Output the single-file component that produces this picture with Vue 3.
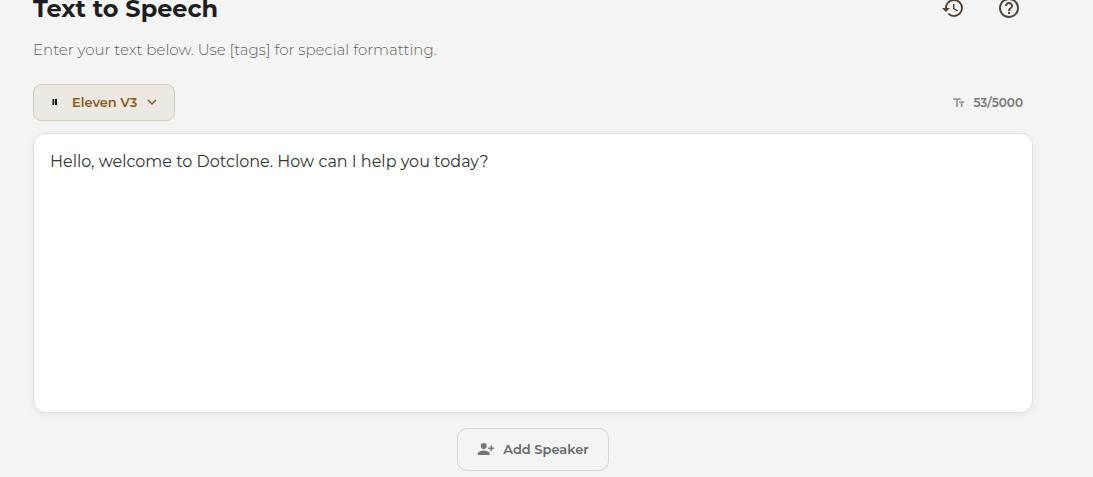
<script setup>
import { computed, ref } from 'vue'

const limit = 5000
const text = ref('Hello, welcome to Dotclone. How can I help you today?')
const count = computed(() => text.value.length)
</script>

<template>
  <main class="page">
    <header class="header">
      <h1 class="title">Text to Speech</h1>
      <div class="actions">
        <button class="icon-button" type="button" aria-label="History">
          <svg class="icon" viewBox="0 0 24 24" aria-hidden="true">
            <path d="M13 3a9 9 0 0 0-9 9H1l3.89 3.89.07.14L9 12H6c0-3.87 3.13-7 7-7s7 3.13 7 7-3.13 7-7 7c-1.93 0-3.68-.79-4.94-2.06l-1.42 1.42A8.954 8.954 0 0 0 13 21a9 9 0 0 0 0-18zm-1 5v5l4.28 2.54.72-1.21-3.5-2.08V8H12z" />
          </svg>
        </button>
        <button class="icon-button" type="button" aria-label="Help">
          <svg class="icon" viewBox="0 0 24 24" aria-hidden="true">
            <path d="M11 18h2v-2h-2v2zm1-16C6.48 2 2 6.48 2 12s4.48 10 10 10 10-4.48 10-10S17.52 2 12 2zm0 18c-4.41 0-8-3.59-8-8s3.59-8 8-8 8 3.59 8 8-3.59 8-8 8zm0-14c-2.21 0-4 1.79-4 4h2c0-1.1.9-2 2-2s2 .9 2 2c0 2-3 1.75-3 5h2c0-2.25 3-2.5 3-5 0-2.21-1.79-4-4-4z" />
          </svg>
        </button>
      </div>
    </header>

    <p class="subtitle">Enter your text below. Use [tags] for special formatting.</p>

    <div class="toolbar">
      <button class="model" type="button" aria-haspopup="listbox">
        <svg class="model-logo" viewBox="0 0 16 16" aria-hidden="true">
          <path d="M5.5 5h1.7v6H5.500zM8 5h2v6h-2z" />
        </svg>
        <span class="model-name">Eleven V3</span>
        <svg class="chevron" viewBox="0 0 24 24" aria-hidden="true">
          <path d="M7.41 8.59 12 13.17l4.59-4.58L18 10l-6 6-6-6z" />
        </svg>
      </button>
      <div class="counter">
        <svg class="counter-icon" viewBox="0 0 24 24" aria-hidden="true">
          <path d="M2 4v3h5v12h3V7h5V4H2zm19 5h-9v3h3v7h3v-7h3V9z" />
        </svg>
        <span>{{ count }}/{{ limit }}</span>
      </div>
    </div>

    <textarea v-model="text" class="editor" :maxlength="limit" rows="10" aria-label="Text to speak" spellcheck="false"></textarea>

    <button class="add" type="button">
      <svg class="add-icon" viewBox="0 0 24 24" aria-hidden="true">
        <circle cx="9" cy="8" r="4" />
        <path d="M9 14c-2.67 0-8 1.34-8 4v2h16v-2c0-2.66-5.33-4-8-4zM20 10V7h-2v3h-3v2h3v3h2v-3h3v-2z" />
      </svg>
      <span>Add Speaker</span>
    </button>
  </main>
</template>

<style>
body {
  background: #f4f4f4;
}
</style>

<style scoped>
.page {
  display: flex;
  flex-direction: column;
  padding: 0 60px 6px 33px;
  font-family: Montserrat, Inter, "Open Sans", sans-serif;
}

button,
textarea {
  box-sizing: border-box;
  margin: 0;
  font-family: inherit;
}

button {
  cursor: pointer;
}

svg {
  display: block;
  flex: none;
  fill: currentColor;
}

.header {
  display: flex;
  align-items: center;
  justify-content: space-between;
  height: 16px;
}

.title {
  margin: 0;
  padding-top: 2px;
  color: #1e1e1e;
  font-size: 24px;
  font-weight: 700;
  line-height: 32px;
}

.actions {
  display: flex;
  gap: 8px;
}

.icon-button {
  padding: 12px;
  border: 0;
  background: none;
  color: #4e4437;
}

.icon {
  width: 24px;
  height: 24px;
}

.subtitle {
  margin: 24px 0;
  color: #606060;
  font-size: 15px;
  font-weight: 300;
  line-height: 20px;
}

.toolbar {
  display: flex;
  align-items: center;
  justify-content: space-between;
  margin-bottom: 12px;
}

.model {
  display: flex;
  align-items: center;
  height: 37px;
  padding: 0 13px 2px;
  border: 1px solid #d8ccb8;
  border-radius: 8px;
  background: #ece8e2;
  color: #8b5a1c;
  font-size: 13px;
  font-weight: 600;
  line-height: 20px;
}

.model-logo {
  width: 16px;
  height: 16px;
  margin-right: 9px;
  color: #111;
}

.chevron {
  width: 18px;
  height: 18px;
  margin-left: 6px;
}

.counter {
  display: flex;
  align-items: center;
  gap: 7px;
  padding-right: 10px;
  color: #777;
  font-size: 12px;
  font-weight: 600;
  line-height: 20px;
}

.counter-icon {
  width: 14px;
  height: 14px;
  color: #999;
}

.editor {
  display: block;
  width: 100%;
  height: 280px;
  padding: 16px;
  border: 1px solid #dedede;
  border-radius: 12px;
  outline: 0;
  background: #fff;
  box-shadow: 0 2px 10px rgba(0, 0, 0, 0.05);
  color: #333;
  font-size: 16px;
  font-weight: 400;
  line-height: 24px;
  resize: none;
}

.add {
  display: flex;
  align-items: center;
  align-self: center;
  gap: 8px;
  height: 43px;
  margin-top: 15px;
  padding: 0 19px 2px;
  border: 1px solid #d6d6d6;
  border-radius: 10px;
  background: #f4f4f4;
  color: #686868;
  font-size: 13px;
  font-weight: 600;
  line-height: 20px;
}

.add-icon {
  width: 18px;
  height: 18px;
  color: #777;
}
</style>
